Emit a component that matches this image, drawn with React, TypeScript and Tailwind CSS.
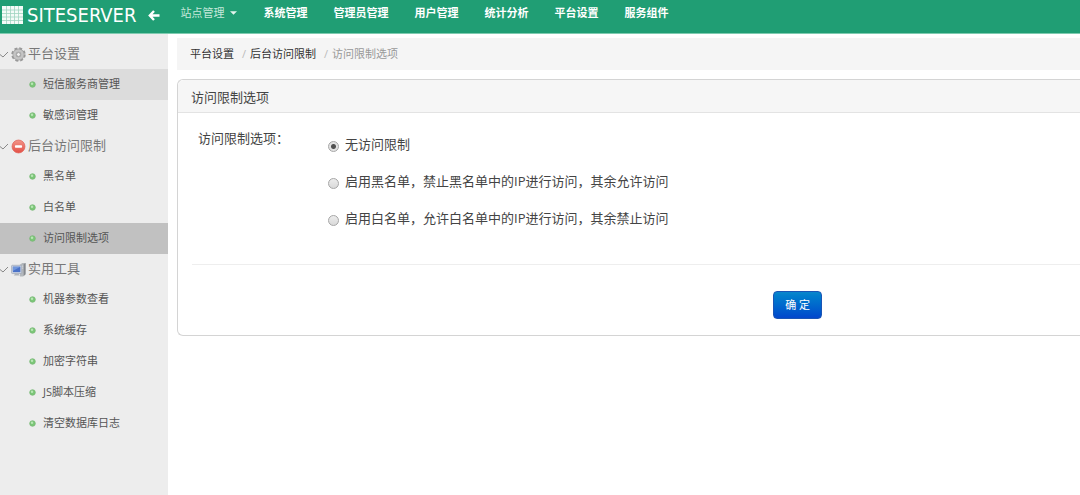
import { useState } from 'react';
import type { ReactNode } from 'react';

const navItems = ['系统管理', '管理员管理', '用户管理', '统计分析', '平台设置', '服务组件'];

const accessOptions = [
  { value: 'none', text: '无访问限制' },
  { value: 'black', text: '启用黑名单，禁止黑名单中的IP进行访问，其余允许访问' },
  { value: 'white', text: '启用白名单，允许白名单中的IP进行访问，其余禁止访问' },
];

const GearIcon = () => (
  <svg width="15" height="15" viewBox="0 0 16 16">
    <circle cx="8" cy="8" r="6.4" fill="none" stroke="#999" strokeWidth="2.6" strokeDasharray="3 2.03" />
    <circle cx="8" cy="8" r="4.3" fill="none" stroke="#999" strokeWidth="4" />
    <circle cx="8" cy="8" r="4.3" fill="none" stroke="#c4c4c4" strokeWidth="2.8" />
    <circle cx="8" cy="8" r="2.1" fill="#efefef" stroke="#909090" strokeWidth="0.8" />
  </svg>
);

const StopIcon = () => (
  <svg width="15" height="15" viewBox="0 0 16 16">
    <defs>
      <linearGradient id="stop" x1="0" y1="0" x2="0" y2="1">
        <stop offset="0" stopColor="#f2968a" />
        <stop offset="1" stopColor="#e34f45" />
      </linearGradient>
    </defs>
    <circle cx="8" cy="8" r="6.9" fill="url(#stop)" stroke="#e0665c" strokeWidth="0.8" />
    <rect x="4.2" y="6.6" width="7.6" height="2.8" rx="0.8" fill="#fff" />
  </svg>
);

const ComputerIcon = () => (
  <svg width="15" height="15" viewBox="0 0 16 16">
    <path d="M9.5 3 12 1h3.5v12L13 15.5H9.5z" fill="#b4b8bc" />
    <path d="M13.5 2.5 15.5 1v12l-2 2z" fill="#85898e" />
    <path d="M11 4.5h2M11 6.5h2" stroke="#eceef0" strokeWidth="0.8" />
    <rect x="0.6" y="3.5" width="10.8" height="8.8" rx="0.8" fill="#cdd4e0" stroke="#98a2b4" strokeWidth="0.7" />
    <rect x="2" y="5" width="8" height="5.8" fill="#4a72c8" />
    <path d="M2 5h8L2 9.5z" fill="#7096dc" />
    <path d="M4.5 12.3h3.4l1.5 2.2H3z" fill="#b0b5bc" />
  </svg>
);

type Group = { title: string; icon: ReactNode; items: string[] };

const groups: Group[] = [
  { title: '平台设置', icon: <GearIcon />, items: ['短信服务商管理', '敏感词管理'] },
  { title: '后台访问限制', icon: <StopIcon />, items: ['黑名单', '白名单', '访问限制选项'] },
  {
    title: '实用工具',
    icon: <ComputerIcon />,
    items: ['机器参数查看', '系统缓存', '加密字符串', 'JS脚本压缩', '清空数据库日志'],
  },
];

const rowColor = (item: string) => {
  if (item === '访问限制选项') return 'bg-[#c1c1c1]';
  if (item === '短信服务商管理') return 'bg-[#dcdcdc]';
  return 'hover:bg-[#dcdcdc]';
};

const Header = () => (
  <header className="flex h-[34px] items-start border-b border-[#7fcbb0] bg-[#209e74] text-white">
    <a href="#" className="flex h-[30px] items-center pl-0.5">
      <svg width="21" height="18" viewBox="0 0 21 18" className="mr-1">
        <rect width="21" height="18" fill="#f4fbf8" />
        <path
          d="M4.5 0v18M8.5 0v18M12.5 0v18M16.5 0v18M0 4h21M0 7.5h21M0 11h21M0 14.5h21"
          stroke="#9fd4c0"
          strokeWidth="0.8"
        />
      </svg>
      <span className="font-['DejaVu_Sans_Condensed','Open_Sans',sans-serif] text-[20px] leading-none">
        SITESERVER
      </span>
    </a>
    <button aria-label="收起菜单" className="ml-3 flex h-[30px] items-center">
      <svg width="12" height="11" viewBox="0 0 12 11">
        <path d="M6 1 1.8 5.5 6 10M2 5.5h9.5" fill="none" stroke="#fff" strokeWidth="2.4" />
      </svg>
    </button>
    <nav className="ml-5 flex h-[26px] items-center gap-[26px] text-[11px] font-bold whitespace-nowrap">
      <a href="#" className="flex items-center gap-1.5 font-normal text-[#c5e8db]">
        站点管理
        <svg width="7" height="4" viewBox="0 0 8 4">
          <path d="M0 0h8L4 4z" fill="#e3f4ed" />
        </svg>
      </a>
      {navItems.map((item) => (
        <a key={item} href="#">
          {item}
        </a>
      ))}
    </nav>
  </header>
);

const Sidebar = () => (
  <aside className="w-[168px] shrink-0 bg-[#ededed] pt-[5px]">
    {groups.map((group) => (
      <section key={group.title}>
        <h2 className="flex h-[30px] items-center text-[13px] text-[#777]">
          <svg width="8" height="7" viewBox="0 0 8 7" className="mr-[3px]">
            <path d="M0 3.5 3 6 8 1" fill="none" stroke="#888" />
          </svg>
          {group.icon}
          <span className="ml-0.5">{group.title}</span>
        </h2>
        <ul>
          {group.items.map((item) => (
            <li key={item} className={rowColor(item)}>
              <a href="#" className="flex h-[31px] items-center gap-[7px] pl-[29px] text-[11px] text-[#555]">
                <svg width="7" height="7" viewBox="0 0 7 7">
                  <circle cx="3.5" cy="3.5" r="2.8" fill="#7cc778" stroke="#74b571" strokeWidth="0.7" />
                  <circle cx="3" cy="2.7" r="1.2" fill="#b9e6b5" />
                </svg>
                {item}
              </a>
            </li>
          ))}
        </ul>
      </section>
    ))}
  </aside>
);

const AccessForm = () => {
  const [access, setAccess] = useState('none');

  return (
    <form
      className="mt-[9px] rounded-l-md border border-r-0 border-[#d4d4d4] text-[13px] text-[#444]"
      onSubmit={(e) => e.preventDefault()}
    >
      <h1 className="h-[33px] rounded-tl-md border-b border-[#e3e3e3] bg-[#f6f6f6] pl-[13px] leading-[34px]">
        访问限制选项
      </h1>
      <div className="px-3.5">
        <fieldset className="flex pt-[13px] pb-[27px] pl-1.5">
          <legend className="float-left w-[130px] pt-0.5 leading-5">访问限制选项：</legend>
          <div className="flex flex-col">
            {accessOptions.map((option) => (
              <label key={option.value} className="flex h-[37px] items-center gap-1.5">
                <input
                  type="radio"
                  name="access"
                  value={option.value}
                  checked={access === option.value}
                  onChange={() => setAccess(option.value)}
                  className="mt-1 size-[11px] appearance-none rounded-full border border-[#a6a6a6] bg-linear-to-b from-[#ececec] to-[#dadada] checked:bg-[radial-gradient(circle,#505050_0_2px,#e2e2e2_3px)]"
                />
                {option.text}
              </label>
            ))}
          </div>
        </fieldset>
        <hr className="-mr-3.5 border-[#eee]" />
        <div className="flex justify-end pt-[26px] pr-[244px] pb-4">
          <button
            type="submit"
            className="h-7 rounded border border-[#1a55b5] bg-linear-to-b from-[#0a86cc] to-[#0446cc] px-[11px] text-[11px] text-white"
          >
            确 定
          </button>
        </div>
      </div>
    </form>
  );
};

const App = () => {
  return (
    <div className="flex min-h-screen flex-col bg-white font-['Open_Sans','Noto_Sans_CJK_SC',sans-serif]">
      <Header />
      <div className="flex flex-1">
        <Sidebar />
        <main className="min-w-0 flex-1 pt-1 pl-[9px]">
          <ol className="flex h-8 items-center bg-[#f5f5f5] pl-[13px] text-[11px] text-[#333]">
            <li>
              <a href="#">平台设置</a>
              <span className="pr-1 pl-2 text-[#bbb]">/</span>
            </li>
            <li>
              <a href="#">后台访问限制</a>
              <span className="pr-1 pl-2 text-[#bbb]">/</span>
            </li>
            <li className="text-[#999]">访问限制选项</li>
          </ol>
          <AccessForm />
        </main>
      </div>
    </div>
  );
};

export default App;
